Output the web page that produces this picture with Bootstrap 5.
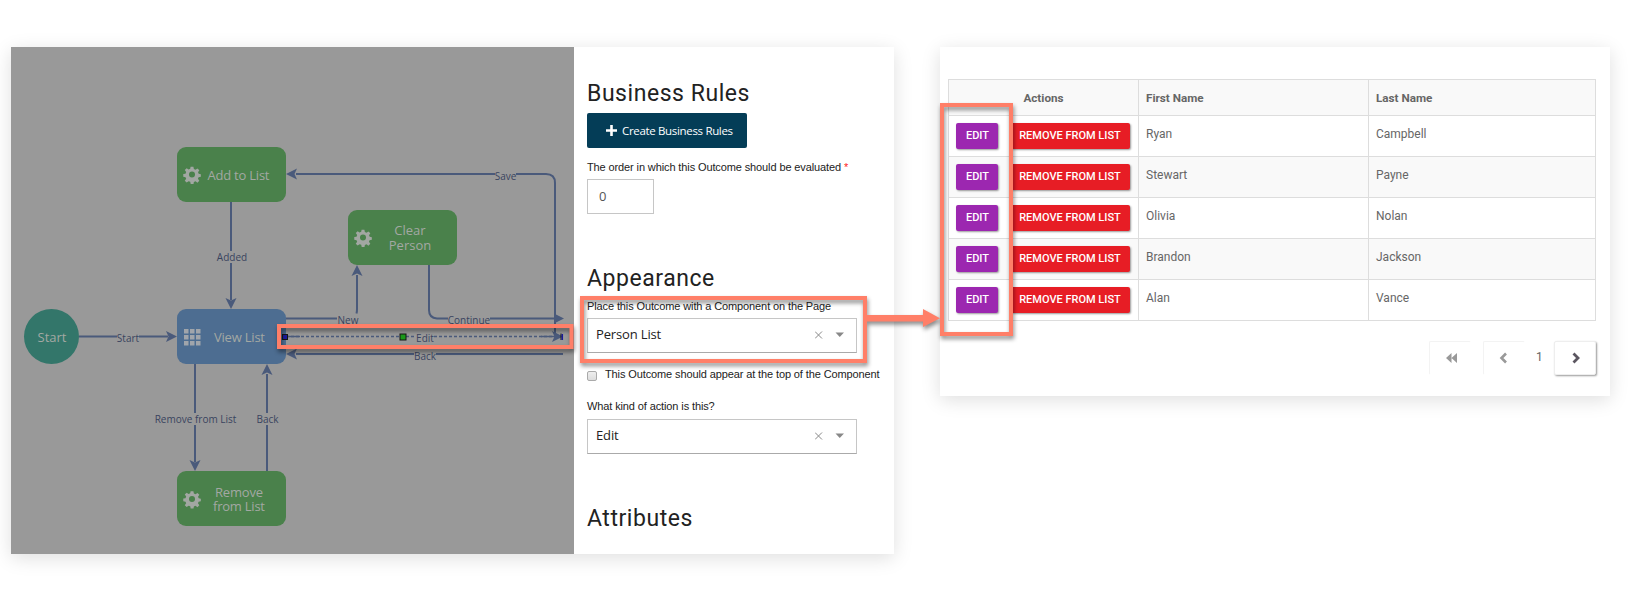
<!DOCTYPE html>
<html lang="en">
<head>
<meta charset="utf-8">
<title>Outcome and list actions</title>
<link href="https://cdn.jsdelivr.net/npm/bootstrap@5.3.0/dist/css/bootstrap.min.css" rel="stylesheet">
<style>
body{background:#fff;font-family:"Liberation Sans",sans-serif;color:#212121;overflow:hidden}
.stage{width:1645px;height:600px;padding:47px 0 0 11px;gap:46px}
.panel{background:#fff;box-shadow:0 4px 18px rgba(0,0,0,.13)}
.flow-panel{width:883px;height:507px}
.list-panel{width:670px;height:349px;padding:32px 14px 0 8px}
.canvas{width:563px;height:507px;background:#999;flex:none}
.canvas text{font-family:"Open Sans",sans-serif;text-anchor:middle}
.wire{fill:none;stroke:#4a5a7b;stroke-width:2}
.tip{fill:#4a5a7b}
.wire-name{font-size:10px;fill:#39445f}
.node-name{font-size:13px;fill:#a3a8a3}
.form-side{width:320px;padding:29px 0 0 13px}
.form-side h2{font:400 23px/35px Roboto,sans-serif;letter-spacing:.55px;margin:0;color:#222}
.btn-create{width:160px;height:35px;background:#043d57;color:#fff;border-radius:2px;border:0;font:500 11.5px/35px "Open Sans",sans-serif;padding:0 0 0 19px;letter-spacing:-.33px;white-space:nowrap}
.btn-create:hover{background:#043d57;color:#fff}
.tag{font-size:11px;line-height:14px;letter-spacing:-.115px;color:#222;white-space:nowrap}
.num-input{width:67px;height:35px;border:1px solid #c6c6c6;border-radius:0;padding:0 11px 2px;font:13px "Open Sans",sans-serif;letter-spacing:-.5px;color:#555}
.picker{width:270px;height:35px;border:1px solid #c6c6c6;border-bottom-color:#aaa;font:13px/31px "Open Sans",sans-serif;letter-spacing:-.15px;color:#222;padding:0 12px 2px 8px}
.tick{width:10px;height:10px;border:1px solid #aaa;border-radius:2px;background:linear-gradient(#eee,#ddd);margin-top:4px}
.people{width:648px;table-layout:fixed;margin:0;border-collapse:collapse;font:12px/16px Roboto,sans-serif}
.people th,.people td{border:1px solid #ddd;padding:10px 7px;color:#666;vertical-align:top}
.people th{height:36px;padding:10px 7px 9px;background:#f9f9f9!important;font-weight:700;font-size:11.7px}
.people td{height:41px}
.people tr:nth-child(even) td{background:#f9f9f9}
.people td.acts{padding:7px 8px 0 7px;white-space:nowrap}
.btn-act{height:26px;border:0;border-radius:2px;font:500 11px/26px Roboto,sans-serif;color:#fff!important;padding:0;text-transform:uppercase;box-shadow:1px 1px 2px rgba(0,0,0,.4)}
.btn-edit{width:42px;padding-left:1px;background:#9c27b0!important}
.btn-drop{width:119px;padding-right:1px;background:#e71d25!important}
.pager{height:34px;margin-top:20px;font:12px/16px Roboto,sans-serif;color:#666}
.pg{width:42px;height:34px;border:1px solid #f3f3f3;border-right-color:#fff;border-bottom-color:#fff;border-radius:2px;padding:0;background:#fff;line-height:1}
.pg-next{width:42px;border-color:#eee;box-shadow:1px 1px 2px rgba(0,0,0,.4)}
.marks{left:0;top:0;pointer-events:none;filter:drop-shadow(1px 3px 2px rgba(0,0,0,.45))}
</style>
<script src="https://cdn.jsdelivr.net/npm/bootstrap@5.3.0/dist/js/bootstrap.bundle.min.js"></script>
</head>
<body>
<main class="stage d-flex align-items-start position-relative">
  <section class="panel flow-panel d-flex flex-none">
    <svg class="canvas" viewBox="11 47 563 507">
      <defs>
        <path id="head" class="tip" d="M0 0L-11 -5.5L-8.5 0L-11 5.5Z"/>
        <g id="gear" fill="#a2a7a2">
          <path fill-rule="evenodd" transform="scale(.94)" d="M-1.5-8.2h3l.5 2.4 1.7.7 2.1-1.4 2 2-1.4 2.1.7 1.7 2.3.4v2.8l-2.4.4-.7 1.700 1.500 2.100-2 2-2.100-1.500-1.700.7-.4 2.300h-3l-.5-2.400-1.700-.7-2.100 1.500-2-2 1.500-2.100-.7-1.700-2.400-.5v-2.800l2.400-.4.7-1.700-1.500-2.100 2-2 2.100 1.400 1.700-.7ZM0-3.200A3.200 3.200 0 1 0 0 3.200 3.200 3.200 0 1 0 0-3.200Z"/>
        </g>
      </defs>
      <g class="wire">
        <path d="M79 336.500H117M139 336.500H168M231 202V251M231 263V300M286 318.500H337M356.500 313.500Q357 312 357 309V275M429 265V310Q429 318 437 318.500H448M490 318.500H555M296 174H495M516 174H546Q555 174 555 183V333M296 354H414M436 354H563M195 364V413M195 425V462M267 471V425M267 413V374"/>
        <path d="M286 336.500H415M434 336.500H555" stroke-width="1.300" stroke-dasharray="3 2"/>
        <path d="M288 336.500H300M541 336.500H555" stroke-width="1.300"/>
      </g>
      <use href="#head" x="177" y="336.500"/>
      <use href="#head" transform="translate(231 309) rotate(90)"/>
      <use href="#head" transform="translate(357 265) rotate(-90)"/>
      <path class="tip" d="M564 318.500L554 313.500V323.500Z"/>
      <use href="#head" transform="translate(286 174) rotate(180)"/>
      <use href="#head" transform="translate(286 354) rotate(180)"/>
      <use href="#head" transform="translate(195 471) rotate(90)"/>
      <use href="#head" transform="translate(267 364) rotate(-90)"/>
      <use href="#head" x="563" y="336.500"/>
      <g class="wire-name">
        <text x="128" y="342">Start</text><text x="232" y="261">Added</text>
        <text x="505.500" y="180">Save</text><text x="348" y="324">New</text>
        <text x="469" y="324">Continue</text><text x="425" y="342">Edit</text>
        <text x="425" y="360">Back</text><text x="195.500" y="423">Remove from List</text>
        <text x="267.500" y="423">Back</text>
      </g>
      <circle cx="51.500" cy="336.500" r="27.500" fill="#33766a"/>
      <g fill="#4a814b">
        <rect x="177" y="147" width="109" height="55" rx="9"/>
        <rect x="348" y="210" width="109" height="55" rx="9"/>
        <rect x="177" y="471" width="109" height="55" rx="9"/>
      </g>
      <rect x="177" y="309" width="109" height="55" rx="9" fill="#4d6d91"/>
      <use href="#gear" x="192" y="174.500"/><use href="#gear" x="363" y="237.500"/><use href="#gear" x="192" y="499"/>
      <path fill="#a0a5ab" d="M184 329h4.500v4.500H184zM190 329h4.500v4.500H190zM196 329h4.500v4.500H196zM184 335h4.500v4.500H184zM190 335h4.500v4.500H190zM196 335h4.500v4.500H196zM184 341h4.500v4.500H184zM190 341h4.500v4.500H190zM196 341h4.500v4.500H196z"/>
      <g class="node-name">
        <text x="52" y="342">Start</text><text x="238.500" y="180" textLength="62">Add to List</text>
        <text x="410" y="235">Clear</text><text x="410" y="250">Person</text>
        <text x="239.500" y="342" textLength="51">View List</text>
        <text x="239" y="497" textLength="48">Remove</text><text x="239" y="511" textLength="52">from List</text>
      </g>
      <g stroke="#151515">
        <rect x="282.500" y="334.500" width="5" height="5" fill="#1a1a99"/>
        <rect x="400" y="334" width="6" height="6" fill="#1a991a"/>
        <path d="M561 333.500V340" stroke-width="1"/><path d="M562.300 334V340" stroke="#1a1a99" stroke-width="1.500"/>
      </g>
    </svg>
    <form class="form-side">
      <h2>Business Rules</h2>
      <button type="button" class="btn btn-create d-flex align-items-center" style="margin-top:2px"><svg width="11" height="11" viewBox="0 0 11 11" style="margin-right:5px"><path d="M5.500 0V11M0 5.500H11" stroke="#fff" stroke-width="2.600"/></svg>Create Business Rules</button>
      <div class="tag" style="margin-top:12px">The order in which this Outcome should be evaluated <span style="color:#f22">*</span></div>
      <input class="form-control num-input" style="margin-top:5px" value="0">
      <h2 style="margin-top:47px">Appearance</h2>
      <div class="tag" style="margin-top:3px">Place this Outcome with a Component on the Page</div>
      <div class="picker d-flex align-items-center" style="margin-top:5px"><span class="me-auto">Person List</span><svg width="29" height="8" viewBox="0 0 29 8"><path d="M0 .5L7 7.500M7 .5L0 7.500" stroke="#888"/><path d="M20.500 1.500H29L24.750 6Z" fill="#888"/></svg></div>
      <div class="d-flex tag" style="margin-top:14px"><span class="tick me-2"></span><span>This Outcome should appear at the top of the Component</span></div>
      <div class="tag" style="margin-top:18px">What kind of action is this?</div>
      <div class="picker d-flex align-items-center" style="margin-top:6px"><span class="me-auto">Edit</span><svg width="29" height="8" viewBox="0 0 29 8"><path d="M0 .5L7 7.500M7 .5L0 7.500" stroke="#888"/><path d="M20.500 1.500H29L24.750 6Z" fill="#888"/></svg></div>
      <h2 style="margin-top:47px">Attributes</h2>
    </form>
  </section>

  <section class="panel list-panel">
    <table class="people">
      <colgroup><col style="width:190px"><col style="width:230px"><col></colgroup>
      <thead><tr><th class="text-center">Actions</th><th>First Name</th><th>Last Name</th></tr></thead>
      <tbody>
        <tr><td class="acts"><div class="d-flex justify-content-between"><button class="btn btn-act btn-edit">Edit</button><button class="btn btn-act btn-drop">Remove from list</button></div></td><td>Ryan</td><td>Campbell</td></tr>
        <tr><td class="acts"><div class="d-flex justify-content-between"><button class="btn btn-act btn-edit">Edit</button><button class="btn btn-act btn-drop">Remove from list</button></div></td><td>Stewart</td><td>Payne</td></tr>
        <tr><td class="acts"><div class="d-flex justify-content-between"><button class="btn btn-act btn-edit">Edit</button><button class="btn btn-act btn-drop">Remove from list</button></div></td><td>Olivia</td><td>Nolan</td></tr>
        <tr><td class="acts"><div class="d-flex justify-content-between"><button class="btn btn-act btn-edit">Edit</button><button class="btn btn-act btn-drop">Remove from list</button></div></td><td>Brandon</td><td>Jackson</td></tr>
        <tr><td class="acts"><div class="d-flex justify-content-between"><button class="btn btn-act btn-edit">Edit</button><button class="btn btn-act btn-drop">Remove from list</button></div></td><td>Alan</td><td>Vance</td></tr>
      </tbody>
    </table>
    <nav class="pager d-flex justify-content-end">
      <button class="btn pg" style="padding:0 0 1px 4px"><svg width="12" height="10" viewBox="0 0 12 10"><path d="M0 5L5.500 0V10ZM5.500 5L11 0V10Z" fill="#999"/></svg></button>
      <button class="btn pg" style="margin-left:12px;padding:0 2px 1px 0"><svg width="9" height="12" viewBox="0 0 9 12"><path d="M7 1.500L2.500 6L7 10.500" fill="none" stroke="#999" stroke-width="2.600"/></svg></button>
      <span style="width:29px;padding:8px 0 0 11px">1</span>
      <button class="btn pg pg-next" style="padding:0 0 1px 2px"><svg width="9" height="12" viewBox="0 0 9 12"><path d="M1.500 1.500L6 6L1.500 10.500" fill="none" stroke="#5b5660" stroke-width="2.800"/></svg></button>
    </nav>
  </section>

  <svg class="marks position-absolute" width="1645" height="600" fill="none" stroke="#ff7f68" stroke-width="4">
    <rect x="279" y="326" width="292.500" height="21"/>
    <rect x="582" y="298" width="283" height="63"/>
    <rect x="942" y="105" width="69" height="229"/>
    <path d="M866 318.300H924" stroke-width="6.500"/>
    <path d="M923 309L940 318.300L923 327Z" fill="#ff7f68" stroke="none"/>
  </svg>
</main>
</body>
</html>
